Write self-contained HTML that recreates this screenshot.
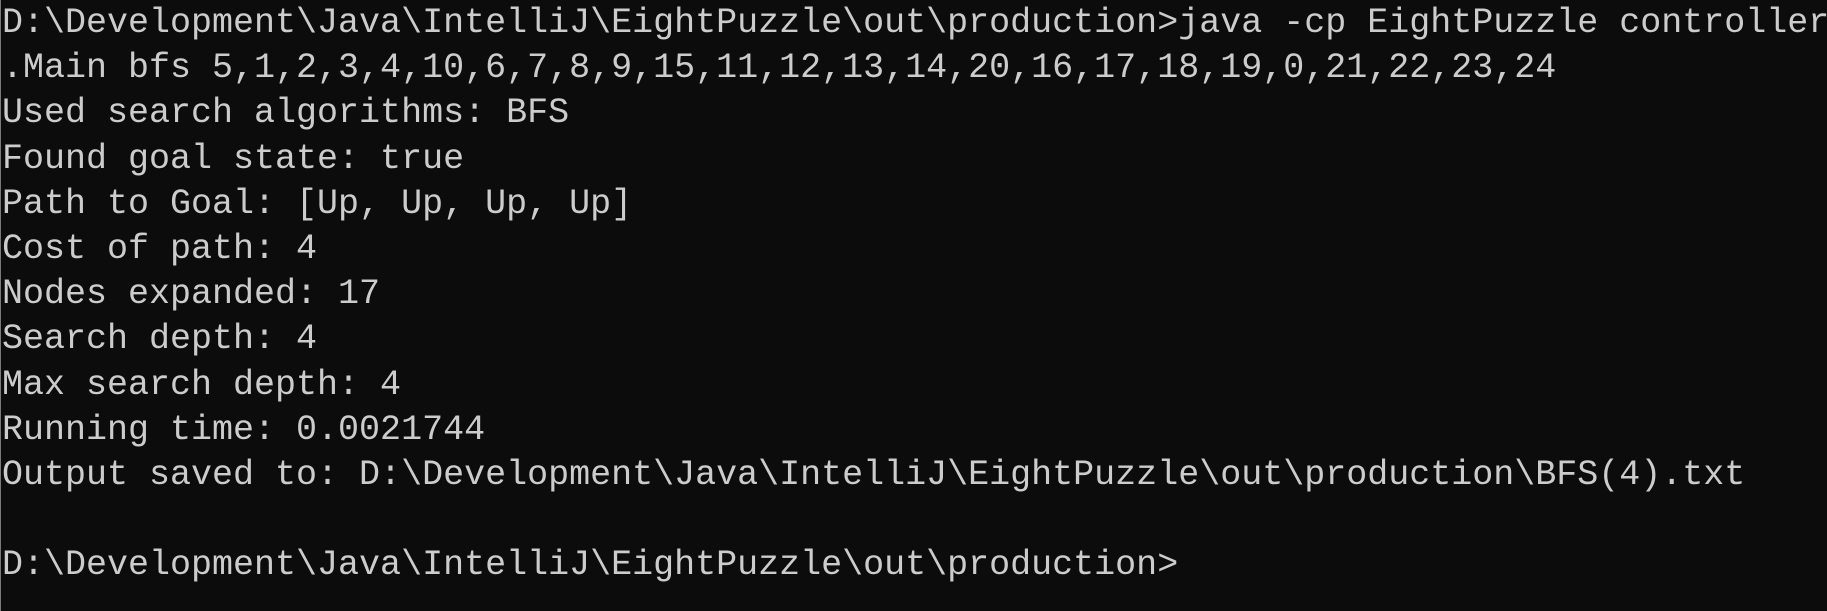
<!DOCTYPE html>
<html><head><meta charset="utf-8"><style>
html,body{margin:0;padding:0;background:#0c0c0c;width:1827px;height:611px;overflow:hidden}
.t{position:absolute;left:2px;top:1px;font-family:"Liberation Mono",monospace;font-size:35px;letter-spacing:0px;line-height:45.2px;color:#cccccc;white-space:pre}
.b{position:absolute;left:0;top:0;width:1px;height:611px;background:#7a7a7a}
</style></head><body>
<div class="b"></div>
<div class="t">D:\Development\Java\IntelliJ\EightPuzzle\out\production&gt;java -cp EightPuzzle controller
.Main bfs 5,1,2,3,4,10,6,7,8,9,15,11,12,13,14,20,16,17,18,19,0,21,22,23,24
Used search algorithms: BFS
Found goal state: true
Path to Goal: [Up, Up, Up, Up]
Cost of path: 4
Nodes expanded: 17
Search depth: 4
Max search depth: 4
Running time: 0.0021744
Output saved to: D:\Development\Java\IntelliJ\EightPuzzle\out\production\BFS(4).txt

D:\Development\Java\IntelliJ\EightPuzzle\out\production&gt;</div>
</body></html>
